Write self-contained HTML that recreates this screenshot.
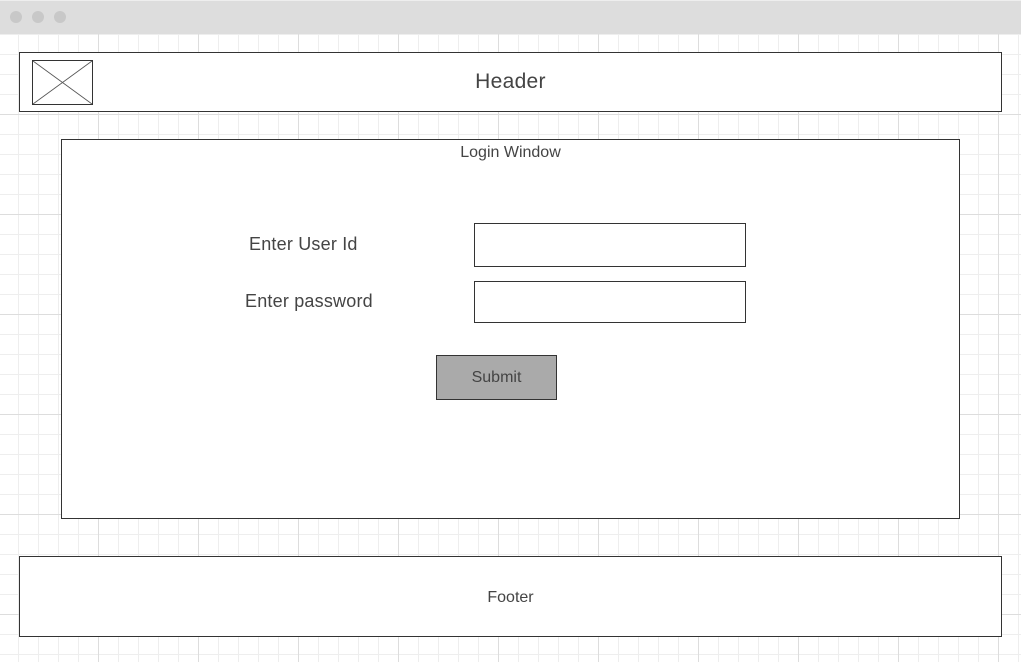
<html><head><style>
body{margin:0;width:1021px;height:662px;overflow:hidden;position:relative;font-family:"Liberation Sans",sans-serif;color:#444;
background-color:#fff;
background-image:linear-gradient(to right,#ddd 1px,transparent 1px),linear-gradient(to bottom,#ddd 1px,transparent 1px),linear-gradient(to right,#eee 1px,transparent 1px),linear-gradient(to bottom,#eee 1px,transparent 1px);
background-size:100px 100px,100px 100px,20px 20px,20px 20px;
background-position:-2px 14px,-2px 14px,-2px 14px,-2px 14px;}
.bar{position:absolute;left:0;top:0;width:1021px;height:34px;background:#ddd;border-top:1px solid #eee;box-sizing:border-box}
.dot{position:absolute;top:10px;width:12px;height:12px;border-radius:50%;background:#c8c8c8}
.box{position:absolute;background:#fff;border:1px solid #333;box-sizing:border-box}
.t{position:absolute;white-space:nowrap}
</style></head><body>
<div class="bar"><div class="dot" style="left:10px"></div><div class="dot" style="left:32px"></div><div class="dot" style="left:54px"></div></div>
<div class="box" style="left:19px;top:52px;width:983px;height:60px"></div>
<svg style="position:absolute;left:32px;top:60px" width="62" height="45"><rect x="0.5" y="0.5" width="60" height="44" fill="#fff" stroke="#333"/><path d="M1 1L60 44M60 1L1 44" stroke="#555" stroke-width="0.8"/></svg>
<div class="t" style="left:0;width:1021px;text-align:center;top:70px;font-size:21px;letter-spacing:0.3px">Header</div>
<div class="box" style="left:61px;top:139px;width:899px;height:380px"></div>
<div class="t" style="left:61px;width:899px;text-align:center;top:144px;font-size:16px">Login Window</div>
<div class="t" style="left:249px;top:234px;font-size:18px;letter-spacing:0.2px">Enter User Id</div>
<div class="t" style="left:245px;top:291px;font-size:18px;letter-spacing:0.2px">Enter password</div>
<div class="box" style="left:474px;top:223px;width:272px;height:44px"></div>
<div class="box" style="left:474px;top:281px;width:272px;height:42px"></div>
<div class="box" style="left:436px;top:355px;width:121px;height:45px;background:#aaa"></div>
<div class="t" style="left:436px;width:121px;text-align:center;top:369px;font-size:16px">Submit</div>
<div class="box" style="left:19px;top:556px;width:983px;height:81px"></div>
<div class="t" style="left:0;width:1021px;text-align:center;top:589px;font-size:16px">Footer</div>
</body></html>
